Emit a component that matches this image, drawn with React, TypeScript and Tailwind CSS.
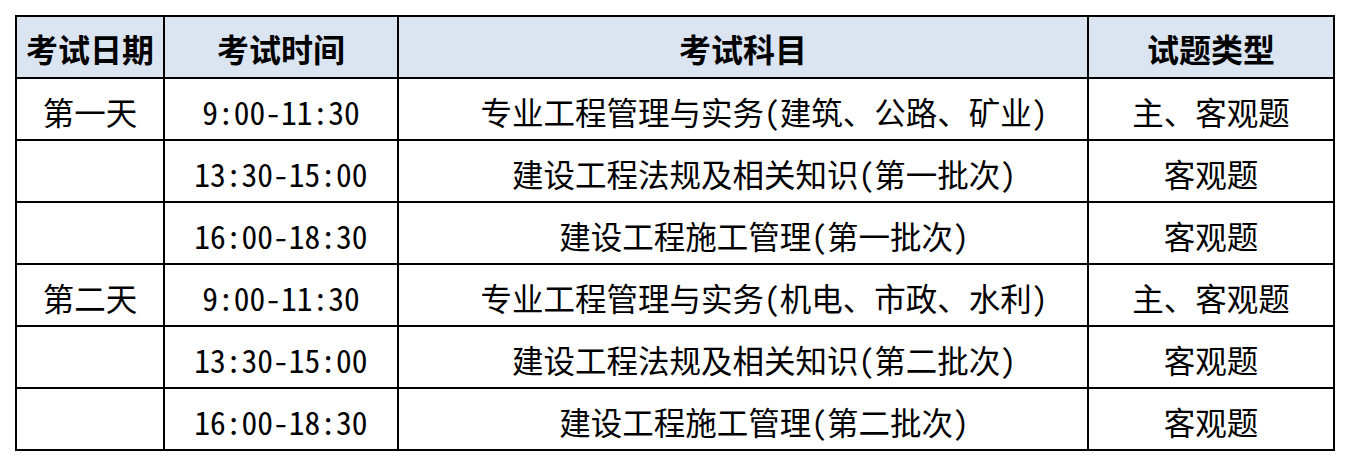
import React from "react";

const rows: [string, string, string, string][] = [
  ["第一天", "9:00-11:30", "专业工程管理与实务(建筑、公路、矿业)", "主、客观题"],
  ["", "13:30-15:00", "建设工程法规及相关知识(第一批次)", "客观题"],
  ["", "16:00-18:30", "建设工程施工管理(第一批次)", "客观题"],
  ["第二天", "9:00-11:30", "专业工程管理与实务(机电、市政、水利)", "主、客观题"],
  ["", "13:30-15:00", "建设工程法规及相关知识(第二批次)", "客观题"],
  ["", "16:00-18:30", "建设工程施工管理(第二批次)", "客观题"],
];

const font = "[font-family:'Noto_Sans_Mono_CJK_SC','Noto_Sans_CJK_SC',sans-serif]";
const cell =
  "h-[62px] border-r-2 border-b-2 border-black flex items-center justify-center text-[31.5px] leading-none pt-[5px]";

export default function App() {
  return (
    <div className="w-[1350px] h-[466px] bg-white pl-[15px] pt-[15px]">
      <div
        className={`grid grid-cols-[148px_234px_690px_246px] w-[1320px] border-l-2 border-t-2 border-black text-black ${font}`}
      >
        {["考试日期", "考试时间", "考试科目", "试题类型"].map((h) => (
          <div
            key={h}
            className="h-[62px] bg-[#dbe5f1] border-r-2 border-b-2 border-black flex items-center justify-center text-[32px] font-semibold leading-none pt-[2px] [font-family:'Noto_Sans_CJK_SC',sans-serif]"
          >
            {h}
          </div>
        ))}
        {rows.map((r, i) => (
          <React.Fragment key={i}>
            <div className={cell}>{r[0]}</div>
            <div className={cell}>{r[1]}</div>
            <div className={`${cell} pl-[42px]`}>{r[2]}</div>
            <div className={cell}>{r[3]}</div>
          </React.Fragment>
        ))}
      </div>
    </div>
  );
}
